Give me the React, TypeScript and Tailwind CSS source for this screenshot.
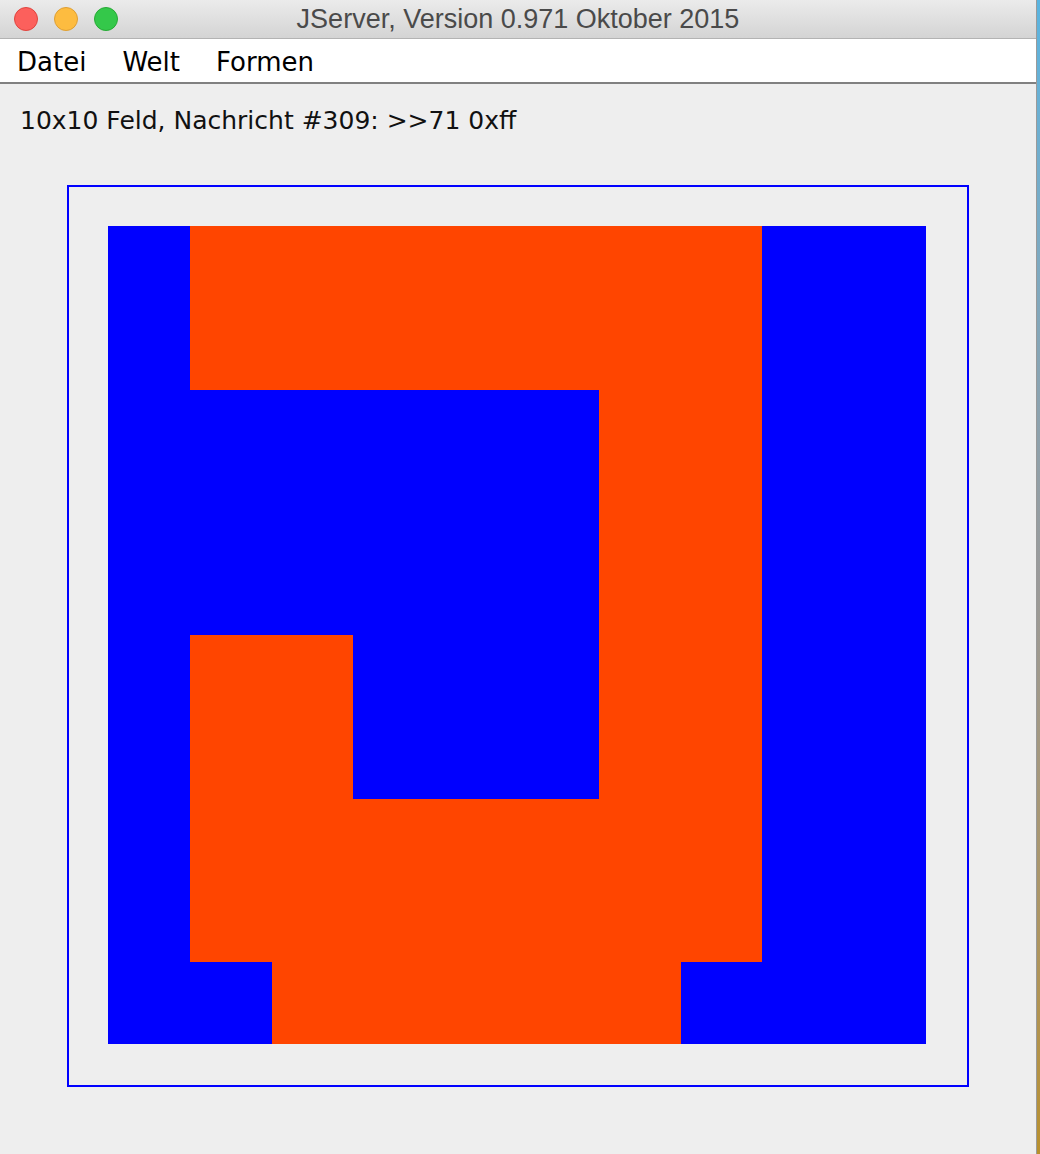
const rows = [
  "BOOOOOOOBB",
  "BOOOOOOOBB",
  "BBBBBBOOBB",
  "BBBBBBOOBB",
  "BBBBBBOOBB",
  "BOOBBBOOBB",
  "BOOBBBOOBB",
  "BOOOOOOOBB",
  "BOOOOOOOBB",
  "BBOOOOOBBB",
];

function Lights() {
  return (
    <div className="flex items-center gap-[16px] pl-[14px]">
      <span className="w-[24px] h-[24px] rounded-full bg-[#fc605c] border border-[#e0443e]" />
      <span className="w-[24px] h-[24px] rounded-full bg-[#fdbc40] border border-[#de9f34]" />
      <span className="w-[24px] h-[24px] rounded-full bg-[#34c84a] border border-[#27aa35]" />
    </div>
  );
}

export default function App() {
  return (
    <div className="w-[1040px] h-[1154px] flex bg-[#eeeeee] overflow-hidden">
      <div className="w-[1037px] h-full flex flex-col bg-[#eeeeee] border-r border-[#9a9a9a]">
        {/* title bar */}
        <div className="relative h-[39px] flex items-center bg-gradient-to-b from-[#ebebeb] to-[#d4d4d4] border-b border-[#b3b3b3]">
          <Lights />
          <div className="absolute inset-0 flex items-center justify-center text-[27px] text-[#4a4a4a] font-['Liberation_Sans',sans-serif]">
            JServer, Version 0.971 Oktober 2015
          </div>
        </div>

        {/* menu bar */}
        <div className="h-[45px] flex items-center bg-white border-b-2 border-[#808080] pl-[17px] gap-[36px] pt-[4px] text-[26px] text-black font-['DejaVu_Sans',sans-serif]">
          <span>Datei</span>
          <span>Welt</span>
          <span>Formen</span>
        </div>

        {/* status label */}
        <div className="pt-[21px] pl-[20px] h-[52px] leading-[32px] text-[25px] text-[#111] font-['DejaVu_Sans',sans-serif]">
          10x10 Feld, Nachricht #309: &gt;&gt;71 0xff
        </div>

        {/* field */}
        <div className="mt-[49px] ml-[67px] w-[902px] h-[902px] border-2 border-[#0000ff] pt-[39px] pl-[39px]">
          <div className="w-[818px] h-[818px] grid grid-cols-10 grid-rows-10">
            {rows.map((r, y) =>
              r.split("").map((c, x) => (
                <div
                  key={`${y}-${x}`}
                  className={c === "O" ? "bg-[#ff4500]" : "bg-[#0000ff]"}
                />
              ))
            )}
          </div>
        </div>
      </div>
      <div className="flex-1 bg-gradient-to-b from-[#5ab4e0] via-[#9a9a9a] to-[#b8902c]" />
    </div>
  );
}
